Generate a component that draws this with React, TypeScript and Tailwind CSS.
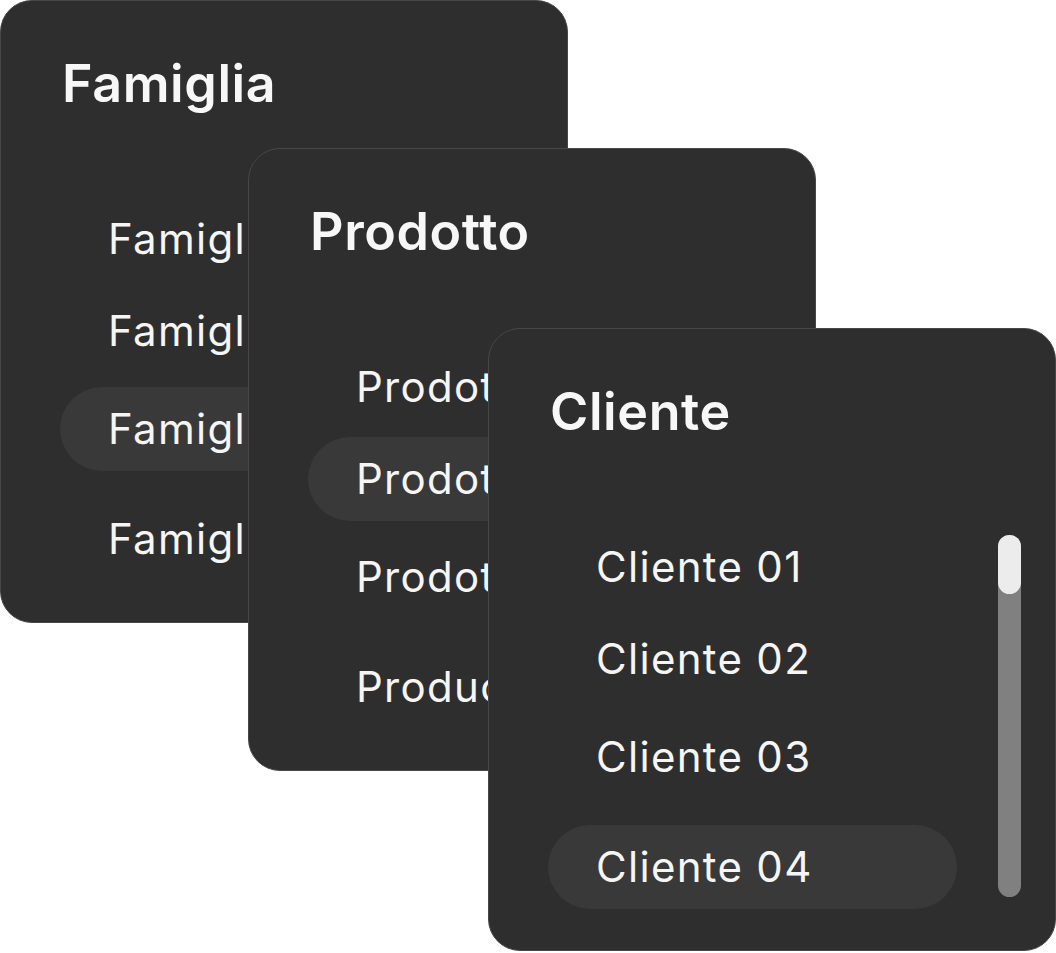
import React from 'react';

interface Panel {
	title: string;
	items: string[];
	active: number;
	scroll?: boolean;
	offset: string;
}

// per-row top spacing, the list is not evenly spaced in the design
const rowGaps = ['mt-0', 'mt-[8px]', 'mt-[14px]', 'mt-[26px]'];

const panels: Panel[] = [
	{ title: 'Famiglia', items: ['Famiglia 01', 'Famiglia 02', 'Famiglia 03', 'Famiglia 04'], active: 2, offset: 'ml-0 mt-0' },
	{ title: 'Prodotto', items: ['Prodotto 01', 'Prodotto 02', 'Prodotto 03', 'Product 04'], active: 1, offset: 'ml-[248px] mt-[148px]' },
	{ title: 'Cliente', items: ['Cliente 01', 'Cliente 02', 'Cliente 03', 'Cliente 04'], active: 3, scroll: true, offset: 'ml-[488px] mt-[328px]' },
];

const SelectPanel: React.FC<{ panel: Panel }> = ({ panel }) => {
	return (
		<div className={`[grid-area:1/1] ${panel.offset} w-[568px] h-[623px] rounded-[32px] border-[1.5px] border-[#474747] bg-[#2e2e2e] overflow-hidden flex flex-col`}>
			<h2 className="pl-[61px] pt-[53px] text-[52px] leading-[60px] font-semibold text-[#f7f7f7] tracking-[0.6px] whitespace-nowrap">
				{panel.title}
			</h2>
			<div className="flex mt-[83px]">
				<ul className="flex flex-col ml-[59px] w-[409px] shrink-0">
					{panel.items.map((item, i) => (
						<li
							key={item}
							className={`${rowGaps[i]} h-[84px] flex items-center pl-[48px] rounded-full whitespace-nowrap text-[42px] leading-none tracking-[1.3px] text-[#f5f5f5] ${i === panel.active ? 'bg-[#393939]' : ''}`}
						>
							{item}
						</li>
					))}
				</ul>
				{panel.scroll && (
					<div className="ml-[41px] mt-[10px] w-[23px] h-[362px] rounded-full bg-[#808080] flex flex-col">
						<div className="h-[59px] rounded-full bg-[#ececec]" />
					</div>
				)}
			</div>
		</div>
	);
};

export default function App() {
	return (
		<div className="w-[1056px] h-[953px] bg-white font-['Inter',sans-serif] overflow-hidden">
			<div className="grid">
				{panels.map((p) => (
					<SelectPanel key={p.title} panel={p} />
				))}
			</div>
		</div>
	);
}
